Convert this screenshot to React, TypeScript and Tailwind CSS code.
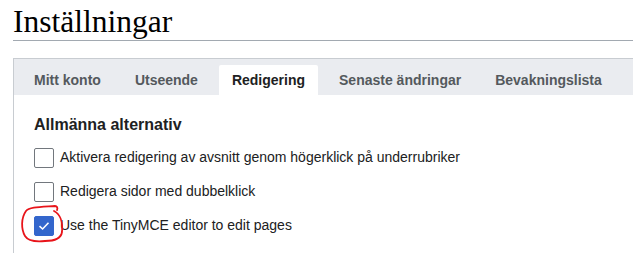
import React from "react";

const Box = ({ checked }: { checked?: boolean }) =>
  checked ? (
    <div className="w-[20px] h-[20px] rounded-[2px] bg-[#3366cc] border border-[#3366cc] flex items-center justify-center shrink-0">
      <svg width="12" height="10" viewBox="0 0 12 10">
        <path d="M1.5 5.2 L4.6 8 L10.5 1.8" fill="none" stroke="white" strokeWidth="1.6" />
      </svg>
    </div>
  ) : (
    <div className="w-[20px] h-[20px] rounded-[2px] bg-white border border-[#72777d] shrink-0" />
  );

export default function App() {
  const tabs = ["Mitt konto", "Utseende", "Redigering", "Senaste ändringar", "Bevakningslista"];
  return (
    <div className="w-[633px] h-[253px] bg-white overflow-hidden relative" style={{ fontFamily: "'Liberation Sans', Arial, sans-serif" }}>
      <h1
        className="ml-[13px] h-[41px] border-b border-[#a2a9b1] text-[31.5px] leading-none pt-[6px] text-[#000]"
        style={{ fontFamily: "'Liberation Serif', 'Times New Roman', serif" }}
      >
        Inställningar
      </h1>
      <div className="ml-[13px] mt-[17px] border-l border-t border-[#c8ccd1] h-[300px]">
        <div className="bg-[#eaecf0] h-[36px] flex items-end pl-[7px] gap-[8px]">
          {tabs.map((t) => (
            <div
              key={t}
              className={
                "h-[30px] px-[13px] flex items-center text-[14px] font-bold rounded-t-[2px] " +
                (t === "Redigering" ? "bg-white text-[#202122]" : "text-[#54595d]")
              }
            >
              {t}
            </div>
          ))}
        </div>
        <div className="pl-[20px] pt-[20px] text-[#202122]">
          <div className="text-[16px] font-bold leading-[20px]">Allmänna alternativ</div>
          <div className="mt-[12px] flex flex-col gap-[13px]">
            <div className="flex items-center gap-[6px] text-[14px] text-[#202122]">
              <Box /> Aktivera redigering av avsnitt genom högerklick på underrubriker
            </div>
            <div className="flex items-center gap-[6px] text-[14px] text-[#202122]">
              <Box /> Redigera sidor med dubbelklick
            </div>
            <div className="flex items-center gap-[6px] text-[14px] text-[#202122]">
              <Box checked /> Use the TinyMCE editor to edit pages
            </div>
          </div>
        </div>
      </div>
      <svg className="absolute left-0 top-0 pointer-events-none" width="633" height="253">
        <path
          d="M54 211 C60 214 63 222 62 232 C61 239 55 241 45 241 C35 242 28 241 25 236 C21 229 21 218 26 211 C29 207 40 207 55 206 C57 206 58 208 57 210"
          fill="none"
          stroke="#e8141a"
          strokeWidth="1.8"
          strokeLinecap="round"
        />
      </svg>
    </div>
  );
}
